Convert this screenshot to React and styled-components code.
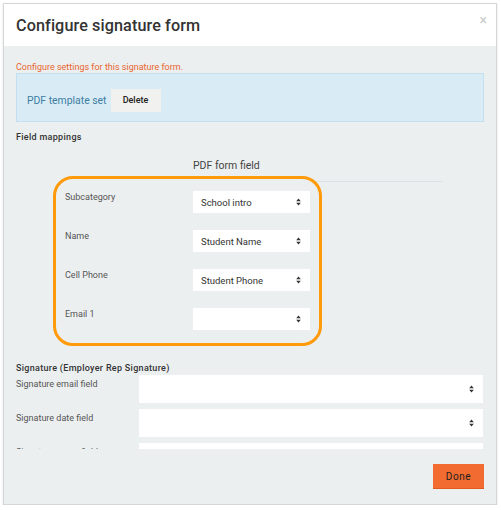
import React from 'react';
import styled, { createGlobalStyle } from 'styled-components';

const GlobalStyle = createGlobalStyle`
  html, body {
    margin: 0;
    padding: 0;
    background: #ffffff;
    font-family: Roboto, "Liberation Sans", sans-serif;
    color: #333;
  }
`;

const Page = styled.div`
  padding: 3px 0 0 3px;
`;

/* Modal shell */
const Modal = styled.div`
  width: 492px;
  height: 500px;
  border: 1px solid #d4d6d7;
  box-shadow: 0 1px 2px rgba(0, 0, 0, 0.12);
  display: flex;
  flex-direction: column;
  background: #eceff0;
  overflow: hidden;
`;

const Header = styled.div`
  height: 42px;
  flex: none;
  background: #fff;
  display: flex;
  align-items: center;
  justify-content: space-between;
  padding: 0 12px;
  position: relative;
`;

const Title = styled.h1`
  margin: 0;
  font-size: 16.2px;
  font-weight: 500;
  color: #333;
  letter-spacing: 0.1px;
`;

const Close = styled.span`
  position: absolute;
  right: 9px;
  top: 9px;
  font-size: 14px;
  line-height: 14px;
  color: #c9cbcc;
`;

const Body = styled.div`
  height: 403px;
  flex: none;
  overflow: hidden;
  padding: 16px 12px 0;
  box-sizing: border-box;
`;

const Notice = styled.div`
  font-size: 9px;
  line-height: 10px;
  color: #e8652f;
`;

const Alert = styled.div`
  margin-top: 1px;
  height: 49px;
  box-sizing: border-box;
  border: 1px solid #c2e0ef;
  background: #d9ecf5;
  display: flex;
  align-items: center;
  gap: 4px;
  padding: 5px 10px 0;
`;

const AlertText = styled.span`
  font-size: 10.4px;
  color: #3d7ca3;
`;

const PlainButton = styled.button`
  width: 50px;
  height: 23px;
  border: none;
  background: #f1f1ef;
  font-family: inherit;
  font-size: 9px;
  font-weight: 500;
  color: #222;
  padding: 0;
`;

const SectionTitle = styled.div`
  font-size: 9px;
  line-height: 10px;
  font-weight: 500;
  color: #333;
  letter-spacing: 0.3px;
  margin-top: ${p => p.$top}px;
`;

const Mapping = styled.div`
  margin-left: 37px;
`;

const MappingHead = styled.div`
  margin-left: 140px;
  width: 250px;
  margin-top: 18px;
  padding-bottom: 9px;
  border-bottom: 1px solid #dde1e3;
  font-size: 10.5px;
  line-height: 12px;
  color: #444;
`;

/* Highlight ring around the mapped fields */
const Highlight = styled.div`
  position: relative;
  margin-top: -6px;
  width: 269px;
  box-sizing: border-box;
  border: 3px solid #ff9a0a;
  border-radius: 20px;
  background: #eceff0;
  padding: 12px 0 13px 9px;
  display: flex;
  flex-direction: column;
  gap: 17px;
`;

const MapRow = styled.div`
  display: grid;
  grid-template-columns: 128px 117px;
`;

const Label = styled.div`
  font-size: 9px;
  line-height: 10px;
  color: #555;
  padding-top: ${p => p.$top || 0}px;
`;

const SelectBox = styled.div`
  height: ${p => p.$h}px;
  background: #fff;
  display: flex;
  align-items: center;
  justify-content: space-between;
  padding: 0 9px 0 8px;
  box-sizing: border-box;
  font-size: 9.5px;
  color: #333;
`;

const SigList = styled.div`
  margin-top: 2px;
  display: flex;
  flex-direction: column;
  gap: 6px;
`;

const SigRow = styled.div`
  display: grid;
  grid-template-columns: 123px 344px;
`;

const Footer = styled.div`
  flex: 1;
  display: flex;
  justify-content: flex-end;
  align-items: flex-start;
  padding: 15px 12px 0;
`;

const DoneButton = styled.button`
  width: 51px;
  height: 25px;
  border: none;
  border-bottom: 1px solid #e0591f;
  background: #f26c31;
  color: #1d1d1d;
  font-family: inherit;
  font-size: 10px;
  letter-spacing: 0.6px;
  padding: 0;
`;

const Arrows = () => (
  <svg width="5" height="8" viewBox="0 0 5 8">
    <path d="M0.2 3.3 L2.5 0.6 L4.8 3.3 Z M0.2 4.7 L2.5 7.4 L4.8 4.7 Z" fill="#333" />
  </svg>
);

const Select = ({ value, h = 22 }) => (
  <SelectBox $h={h}>
    <span>{value}</span>
    <Arrows />
  </SelectBox>
);

const mappings = [
  ['Subcategory', 'School intro'],
  ['Name', 'Student Name'],
  ['Cell Phone', 'Student Phone'],
  ['Email 1', ''],
];

const signatureFields = ['Signature email field', 'Signature date field', 'Signature name field'];

export default function App() {
  return (
    <>
      <GlobalStyle />
      <Page>
        <Modal>
          <Header>
            <Title>Configure signature form</Title>
            <Close>×</Close>
          </Header>
          <Body>
            <Notice>Configure settings for this signature form.</Notice>
            <Alert>
              <AlertText>PDF template set</AlertText>
              <PlainButton type="button">Delete</PlainButton>
            </Alert>
            <SectionTitle $top={10}>Field mappings</SectionTitle>
            <Mapping>
              <MappingHead>PDF form field</MappingHead>
              <Highlight>
                {mappings.map(([label, value]) => (
                  <MapRow key={label}>
                    <Label $top={1}>{label}</Label>
                    <Select value={value} />
                  </MapRow>
                ))}
              </Highlight>
            </Mapping>
            <SectionTitle $top={17}>Signature (Employer Rep Signature)</SectionTitle>
            <SigList>
              {signatureFields.map(label => (
                <SigRow key={label}>
                  <Label $top={4}>{label}</Label>
                  <Select value="" h={28} />
                </SigRow>
              ))}
            </SigList>
          </Body>
          <Footer>
            <DoneButton type="button">Done</DoneButton>
          </Footer>
        </Modal>
      </Page>
    </>
  );
}
